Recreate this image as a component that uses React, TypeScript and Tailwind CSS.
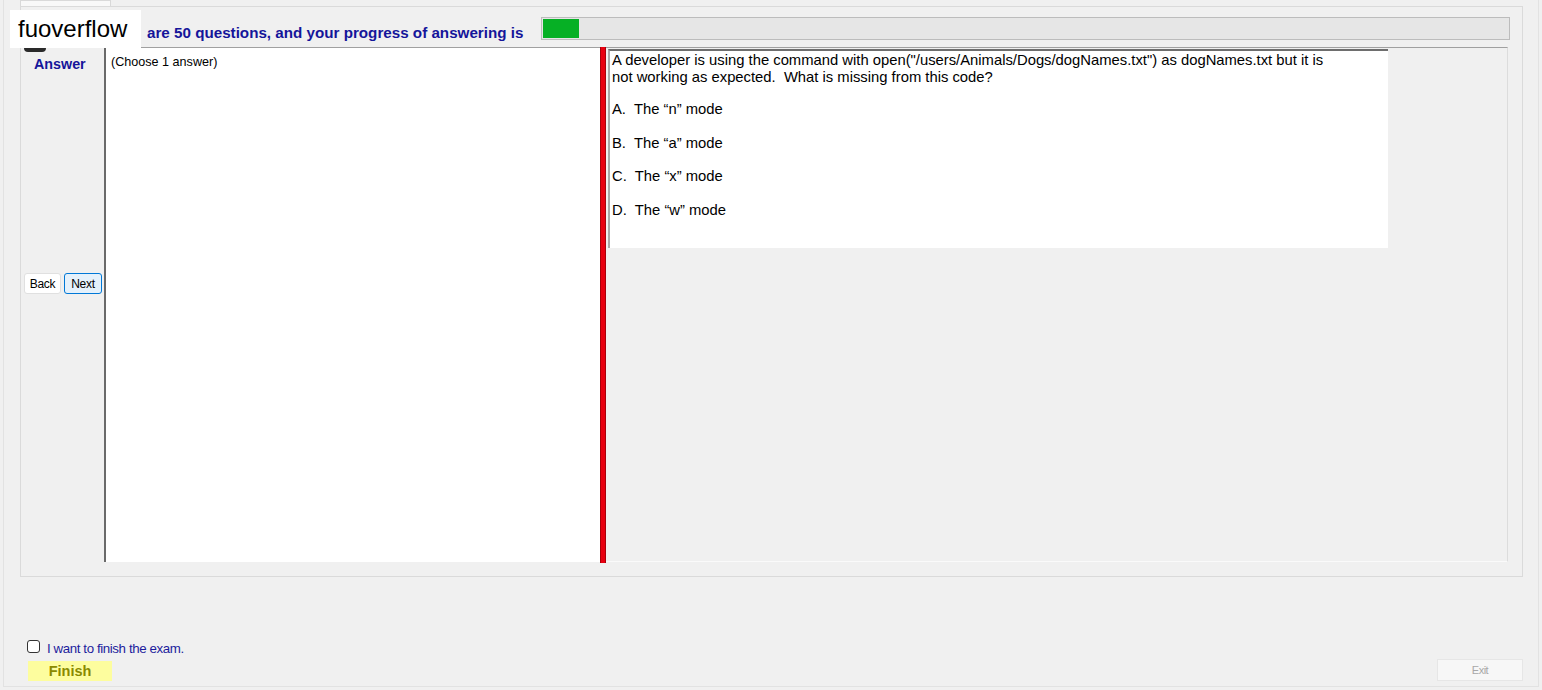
import { useState } from "react";

const options = [
  { letter: "A.", text: "The \u201cn\u201d mode" },
  { letter: "B.", text: "The \u201ca\u201d mode" },
  { letter: "C.", text: "The \u201cx\u201d mode" },
  { letter: "D.", text: "The \u201cw\u201d mode" },
];

export default function App() {
  const [finish, setFinish] = useState(false);

  return (
    <div className="relative w-[1542px] h-[690px] overflow-hidden bg-[#f0f0f0] font-['Liberation_Sans',Arial,sans-serif] text-black">
      {/* watermark */}
      <div className="absolute left-[24px] top-[44px] w-[22px] h-[8px] rounded-full bg-[#2a2a2a]" />
      <div className="absolute left-[10px] top-[10px] w-[131px] h-[38px] bg-white flex items-center pl-[8px] text-[24px] leading-none z-10">
        fuoverflow
      </div>

      <div className="ml-[3px] w-[1536px] h-[687px] border-x border-b border-[#e2e2e2] pl-[16px] flex flex-col">
        {/* tab strip */}
        <div className="h-[6px] w-[91px] bg-[#f8f8f8] border-x border-t border-[#d9d9d9]" />

        {/* tab page */}
        <div className="w-[1503px] h-[571px] border border-[#dadada] bg-[#f0f0f0] px-[1px] flex flex-col">
          <div className="mt-[10px] h-[23px] flex items-center">
            <div className="w-[519px] pl-[125px] text-[15.2px] font-bold text-[#15159a] pt-[9px] whitespace-nowrap">
              are 50 questions, and your progress of answering is
            </div>
            <div className="w-[969px] h-[23px] border border-[#bcbcbc] bg-[#e6e6e6] p-[1px]">
              <div className="w-[36px] h-full bg-[#06b025]" />
            </div>
          </div>

          <div className="mt-[7px] h-[516px] flex">
            {/* left column */}
            <div className="w-[82px] flex flex-col">
              <div className="pl-[12px] pt-[7px] text-[14.3px] font-bold text-[#15159a]">Answer</div>
              <div className="mt-[198px] flex gap-[3px] pl-[2px]">
                <button className="w-[37px] h-[21px] bg-white border border-[#e0e0e0] rounded-[3px] text-[12px] leading-none tracking-[-0.3px]">
                  Back
                </button>
                <button className="w-[38px] h-[21px] bg-[#e5f1fb] border border-[#0078d7] rounded-[3px] text-[12px] leading-none tracking-[-0.3px]">
                  Next
                </button>
              </div>
            </div>

            {/* answer box */}
            <div className="w-[496px] h-[515px] bg-white border-l-2 border-t border-l-[#6a6a6a] border-t-[#a0a0a0] pl-[5px] pt-[5px] text-[12.6px]">
              (Choose 1 answer)
            </div>

            {/* splitter */}
            <div className="w-[6px] h-[516px] bg-[#e80010] border-x border-[#a8000a]" />

            {/* question panel */}
            <div className="w-[902px] h-[515px] border-t border-r border-b border-t-[#a0a0a0] border-r-[#dcdcdc] border-b-[#fafafa] pl-[2px] pt-[1px]">
              <div className="w-[780px] h-[199px] bg-white border-t-2 border-l-2 border-t-[#6e6e6e] border-l-[#a8a8a8] pl-[2px] pt-[1px] text-[14.8px] leading-[17px]">
                <p>
                  A developer is using the command with open("/users/Animals/Dogs/dogNames.txt") as dogNames.txt but it is
                  <br />
                  not working as expected.&nbsp; What is missing from this code?
                </p>
                {options.map((o, i) => (
                  <p key={o.letter} className={i === 0 ? "mt-[15px]" : "mt-[16.7px]"}>
                    {o.letter}&nbsp; {o.text}
                  </p>
                ))}
              </div>
            </div>
          </div>
        </div>

        {/* bottom */}
        <div className="mt-[63px] flex items-center gap-[7px] pl-[7px] h-[13px]">
          <input
            type="checkbox"
            checked={finish}
            onChange={(e) => setFinish(e.target.checked)}
            className="appearance-none w-[13px] h-[13px] border border-[#333] rounded-[3px] bg-white"
          />
          <span className="text-[13.3px] text-[#1d1d9d] tracking-[-0.4px] pt-[4px]">I want to finish the exam.</span>
        </div>
        <div className="mt-[6px] w-[1503px] flex items-end justify-between">
          <button className="ml-[8px] w-[84px] h-[20px] bg-[#fdfd9e] text-[14.5px] font-bold text-[#8a8a00] leading-none">
            Finish
          </button>
          <button className="w-[86px] h-[22px] bg-[#f7f7f7] border border-[#e6e6e6] text-[11px] text-[#a8a8a8] leading-none tracking-[-0.5px]">
            Exit
          </button>
        </div>
      </div>
    </div>
  );
}
